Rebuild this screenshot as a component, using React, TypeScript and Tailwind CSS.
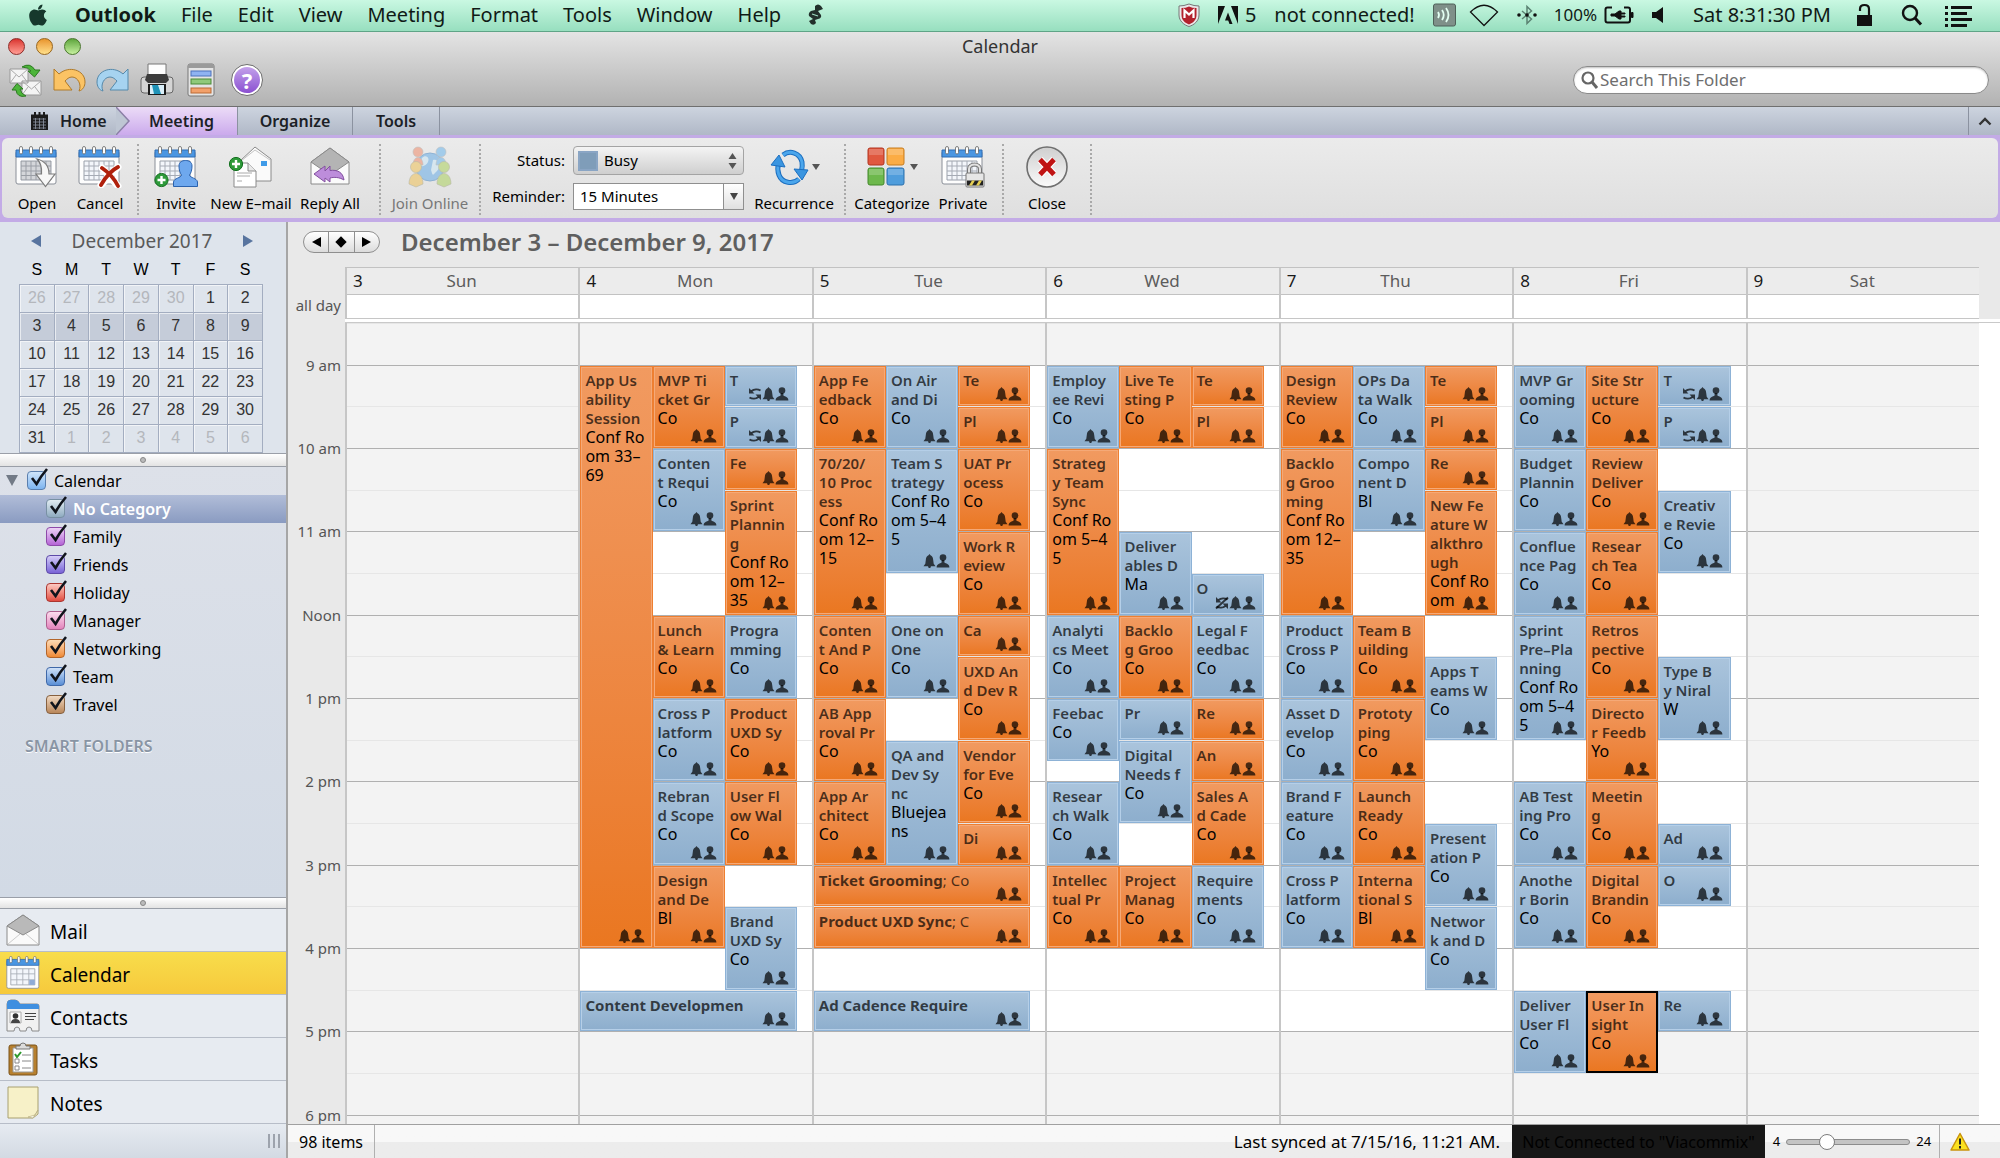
import React from "react";
import { FaApple } from "react-icons/fa";

type Tone = "o" | "b";
type Mark = "" | "recur" | "norecur" | "selected";
type Ev = [col: number, start: number, end: number, tone: Tone, title: string, place?: string, mark?: Mark];

const DAYS: { num: number; name: string; work: boolean; events: Ev[] }[] = [
  { num: 3, name: "Sun", work: false, events: [] },
  {
    num: 4, name: "Mon", work: true, events: [
      [1, 9, 16, "o", "App Us|ability|Session", "Conf Ro|om 33–|69"],
      [2, 9, 10, "o", "MVP Ti|cket Gr", "Co"],
      [2, 10, 11, "b", "Conten|t Requi", "Co"],
      [2, 12, 13, "o", "Lunch|& Learn", "Co"],
      [2, 13, 14, "b", "Cross P|latform", "Co"],
      [2, 14, 15, "b", "Rebran|d Scope", "Co"],
      [2, 15, 16, "o", "Design|and De", "Bl"],
      [3, 9, 9.5, "b", "T", "", "recur"],
      [3, 9.5, 10, "b", "P", "", "recur"],
      [3, 10, 10.5, "o", "Fe"],
      [3, 10.5, 12, "o", "Sprint|Plannin|g", "Conf Ro|om 12–|35"],
      [3, 12, 13, "b", "Progra|mming", "Co"],
      [3, 13, 14, "o", "Product|UXD Sy", "Co"],
      [3, 14, 15, "o", "User Fl|ow Wal", "Co"],
      [3, 15.5, 16.5, "b", "Brand|UXD Sy", "Co"],
      [0, 16.5, 17, "b", "Content Developmen"],
    ],
  },
  {
    num: 5, name: "Tue", work: true, events: [
      [1, 9, 10, "o", "App Fe|edback", "Co"],
      [1, 10, 12, "o", "70/20/|10 Proc|ess", "Conf Ro|om 12–|15"],
      [1, 12, 13, "o", "Conten|t And P", "Co"],
      [1, 13, 14, "o", "AB App|roval Pr", "Co"],
      [1, 14, 15, "o", "App Ar|chitect", "Co"],
      [2, 9, 10, "b", "On Air|and Di", "Co"],
      [2, 10, 11.5, "b", "Team S|trategy", "Conf Ro|om 5–4|5"],
      [2, 12, 13, "b", "One on|One", "Co"],
      [2, 13.5, 15, "b", "QA and|Dev Sy|nc", "Bluejea|ns"],
      [3, 9, 9.5, "o", "Te"],
      [3, 9.5, 10, "o", "Pl"],
      [3, 10, 11, "o", "UAT Pr|ocess", "Co"],
      [3, 11, 12, "o", "Work R|eview", "Co"],
      [3, 12, 12.5, "o", "Ca"],
      [3, 12.5, 13.5, "o", "UXD An|d Dev R", "Co"],
      [3, 13.5, 14.5, "o", "Vendor|for Eve", "Co"],
      [3, 14.5, 15, "o", "Di"],
      [0, 15, 15.5, "o", "Ticket Grooming", "Co"],
      [0, 15.5, 16, "o", "Product UXD Sync", "C"],
      [0, 16.5, 17, "b", "Ad Cadence Require"],
    ],
  },
  {
    num: 6, name: "Wed", work: true, events: [
      [1, 9, 10, "b", "Employ|ee Revi", "Co"],
      [1, 10, 12, "o", "Strateg|y Team|Sync", "Conf Ro|om 5–4|5"],
      [1, 12, 13, "b", "Analyti|cs Meet", "Co"],
      [1, 13, 13.75, "b", "Feebac", "Co"],
      [1, 14, 15, "b", "Resear|ch Walk", "Co"],
      [1, 15, 16, "o", "Intellec|tual Pr", "Co"],
      [2, 9, 10, "o", "Live Te|sting P", "Co"],
      [2, 11, 12, "b", "Deliver|ables D", "Ma"],
      [2, 12, 13, "o", "Backlo|g Groo", "Co"],
      [2, 13, 13.5, "b", "Pr"],
      [2, 13.5, 14.5, "b", "Digital|Needs f", "Co"],
      [2, 15, 16, "o", "Project|Manag", "Co"],
      [3, 9, 9.5, "o", "Te"],
      [3, 9.5, 10, "o", "Pl"],
      [3, 11.5, 12, "b", "O", "", "norecur"],
      [3, 12, 13, "b", "Legal F|eedbac", "Co"],
      [3, 13, 13.5, "o", "Re"],
      [3, 13.5, 14, "o", "An"],
      [3, 14, 15, "o", "Sales A|d Cade", "Co"],
      [3, 15, 16, "b", "Require|ments", "Co"],
    ],
  },
  {
    num: 7, name: "Thu", work: true, events: [
      [1, 9, 10, "o", "Design|Review", "Co"],
      [1, 10, 12, "o", "Backlo|g Groo|ming", "Conf Ro|om 12–|35"],
      [1, 12, 13, "b", "Product|Cross P", "Co"],
      [1, 13, 14, "b", "Asset D|evelop", "Co"],
      [1, 14, 15, "b", "Brand F|eature", "Co"],
      [1, 15, 16, "b", "Cross P|latform", "Co"],
      [2, 9, 10, "b", "OPs Da|ta Walk", "Co"],
      [2, 10, 11, "b", "Compo|nent D", "Bl"],
      [2, 12, 13, "o", "Team B|uilding", "Co"],
      [2, 13, 14, "o", "Prototy|ping", "Co"],
      [2, 14, 15, "o", "Launch|Ready", "Co"],
      [2, 15, 16, "o", "Interna|tional S", "Bl"],
      [3, 9, 9.5, "o", "Te"],
      [3, 9.5, 10, "o", "Pl"],
      [3, 10, 10.5, "o", "Re"],
      [3, 10.5, 12, "o", "New Fe|ature W|alkthro|ugh", "Conf Ro|om"],
      [3, 12.5, 13.5, "b", "Apps T|eams W", "Co"],
      [3, 14.5, 15.5, "b", "Present|ation P", "Co"],
      [3, 15.5, 16.5, "b", "Networ|k and D", "Co"],
    ],
  },
  {
    num: 8, name: "Fri", work: true, events: [
      [1, 9, 10, "b", "MVP Gr|ooming", "Co"],
      [1, 10, 11, "b", "Budget|Plannin", "Co"],
      [1, 11, 12, "b", "Conflue|nce Pag", "Co"],
      [1, 12, 13.5, "b", "Sprint|Pre–Pla|nning", "Conf Ro|om 5–4|5"],
      [1, 14, 15, "b", "AB Test|ing Pro", "Co"],
      [1, 15, 16, "b", "Anothe|r Borin", "Co"],
      [1, 16.5, 17.5, "b", "Deliver|User Fl", "Co"],
      [2, 9, 10, "o", "Site Str|ucture", "Co"],
      [2, 10, 11, "o", "Review|Deliver", "Co"],
      [2, 11, 12, "o", "Resear|ch Tea", "Co"],
      [2, 12, 13, "o", "Retros|pective", "Co"],
      [2, 13, 14, "o", "Directo|r Feedb", "Yo"],
      [2, 14, 15, "o", "Meetin|g", "Co"],
      [2, 15, 16, "o", "Digital|Brandin", "Co"],
      [2, 16.5, 17.5, "o", "User In|sight", "Co", "selected"],
      [3, 9, 9.5, "b", "T", "", "recur"],
      [3, 9.5, 10, "b", "P", "", "recur"],
      [3, 10.5, 11.5, "b", "Creativ|e Revie", "Co"],
      [3, 12.5, 13.5, "b", "Type B|y Niral", "W"],
      [3, 14.5, 15, "b", "Ad"],
      [3, 15, 15.5, "b", "O"],
      [3, 16.5, 17, "b", "Re"],
    ],
  },
  { num: 9, name: "Sat", work: false, events: [] },
];

const HOURS = ["9 am", "10 am", "11 am", "Noon", "1 pm", "2 pm", "3 pm", "4 pm", "5 pm", "6 pm"];

/* ---------- small icons ---------- */

const Bell = () => (
  <svg width="13" height="14" viewBox="0 0 13 14" fill="currentColor" aria-hidden="true">
    <path d="M6.500 0 7.500 1.300C9.300 1.800 10 3.800 10.200 6L10.700 9.800 12.500 12.200H8L7.300 14H5.700L5 12.200H0.500L2.300 9.800 2.800 6C3 3.800 3.700 1.800 5.500 1.300Z" />
  </svg>
);
const Person = () => (
  <svg width="14" height="14" viewBox="0 0 14 14" fill="currentColor" aria-hidden="true">
    <circle cx="7" cy="3.6" r="3.3" />
    <path d="M5.600 6H8.400V8.200H5.600ZM0.600 13.500C0.600 12 1.300 10.600 3 9.800 4.500 9 5.500 9 6 8H8C8.500 9 9.500 9 11 9.800 12.700 10.600 13.400 12 13.400 13.500Z" />
  </svg>
);
const Recur = ({ off }: { off?: boolean }) => (
  <svg width="14" height="14" viewBox="0 0 14 14" fill="none" stroke="currentColor" strokeWidth="2" aria-hidden="true">
    <path d="M12.500 3.500C10 2 6 2 3.500 4M1.500 10.500C4 12 8 12 10.500 10" />
    <path d="M1 1V6.500H6.500ZM13 13V7.500H7.500Z" fill="currentColor" stroke="none" />
    {off && <path d="M1 12.500 13 1.500" />}
  </svg>
);

const Plus = ({ cx, cy }: { cx: number; cy: number }) => (
  <g>
    <circle cx={cx} cy={cy} r="6.600" fill="#2e9a3a" stroke="#14701f" />
    <path d={`M${cx - 4} ${cy}H${cx + 4}M${cx} ${cy - 4}V${cy + 4}`} stroke="#fff" strokeWidth="2.400" />
  </g>
);

const CalendarBase = ({ small }: { small?: boolean }) => (
  <g>
    <rect x="1" y="5" width="40" height="33" rx="2" fill="#fdfdfd" stroke="#8a8f98" />
    <path d="M1 4H41V11H1Z" fill="#4a96e2" stroke="#2f6cb4" />
    <path d="M6 15H36V34H6Z" fill="#f3f6fb" stroke="#9aa0aa" />
    <path
      d={small ? "M6 21H36M6 28H36M13.500 15V34M21 15V34M28.500 15V34" : "M6 20H36M6 25H36M6 29.500H36M11 15V34M16 15V34M21 15V34M26 15V34M31 15V34"}
      stroke="#a6abb5"
    />
    {small && <path d="M29 28H36V34H29Z" fill="#8fabd6" />}
    {[6, 16, 26, 36].map((x) => (
      <rect key={x} x={x - 1.5} y="0.500" width="3" height="7.500" rx="1.500" fill="#fff" stroke="#666" strokeWidth="0.800" />
    ))}
  </g>
);

const Big = ({ children, faded }: { children: React.ReactNode; faded?: boolean }) => (
  <svg width="44" height="42" viewBox="0 0 44 42" fill="none" className={faded ? "opacity-50" : ""} aria-hidden="true">
    {children}
  </svg>
);

const OpenIcon = () => (
  <Big>
    <CalendarBase />
    <path d="M6 15H36V34H6Z" fill="#777" opacity="0.250" />
    <path d="M22 13C30 15 34 20 34 28H40L30.500 40.500 21 28H26.500C27 22 26 17 22 13Z" fill="#f7f7f7" stroke="#7c7c7c" strokeWidth="1.200" />
  </Big>
);
const CancelIcon = () => (
  <Big>
    <CalendarBase />
    <path d="M24 22 40 40M40 21 23 39" stroke="#fff" strokeWidth="7" strokeLinecap="round" />
    <path d="M24 22C30 26 36 32 40 40M40 21C32 25 27 32 23 39" stroke="#b0200c" strokeWidth="3.800" strokeLinecap="round" />
  </Big>
);
const InviteIcon = () => (
  <Big>
    <CalendarBase />
    <path d="M25 20C25 16 28 14.500 31.500 14.500S38 16 38 20C38 24 37 27 35.500 29 36 32 43 32 43.500 36V40.500H19.500V36C20 32 27 32 27.500 29 26 27 25 24 25 20Z" fill="#6ea8ee" stroke="#2b62ad" />
    <Plus cx={7.5} cy={34} />
  </Big>
);
const NewMailIcon = () => (
  <Big>
    <path d="M11 15 26 1 42 13V35H11Z" fill="#fafafa" stroke="#8a8a8a" />
    <path d="M12 15 26 4 41 14" stroke="#c4c4c4" />
    <path d="M32 15H38V20H32Z" fill="#3f9be8" />
    <path d="M5 17H19L27 25V41H5Z" fill="#fff" stroke="#8a8a8a" />
    <path d="M19 17V25H27" stroke="#8a8a8a" fill="#e8e8e8" />
    <path d="M8 27H23M8 30H21M8 35H13" stroke="#aaa" />
    <Plus cx={7} cy={18} />
  </Big>
);
const ReplyAllIcon = () => (
  <Big>
    <path d="M3 16 22 2 41 16V38H3Z" fill="#fbfbfb" stroke="#8a8a8a" />
    <path d="M3 16 22 2 41 16 22 29Z" fill="#b4b4b4" stroke="#8a8a8a" />
    <path d="M6 28 17 20V25L22 20V24.500C29 23.500 35 26 36 34 31 31 26 31 22 32V36L17 32V36Z" fill="#bd8ddb" stroke="#83509f" />
  </Big>
);
const JoinIcon = () => (
  <Big faded>
    <circle cx="22" cy="21" r="14" fill="#5ba6e6" stroke="#3a7fc0" />
    <path d="M14 12C18 8 22 12 20 16S13 22 12 18ZM25 14C30 12 34 20 29 25S25 30 23 24Z" fill="#c7e6f7" />
    {([
      ["#f0825f", 10, 6], ["#5fb0ec", 33, 6],
    ] as [string, number, number][]).map(([c, x, y]) => (
      <g key={c} fill={c} stroke="#999" strokeWidth="0.600">
        <path d={`M${x - 5} ${y + 13}C${x - 5} ${y + 3} ${x + 5} ${y + 3} ${x + 5} ${y + 13}Z`} />
        <circle cx={x} cy={y} r="5" />
      </g>
    ))}
    {([
      ["#f0be4a", 8, 21], ["#a6cf52", 36, 21],
    ] as [string, number, number][]).map(([c, x, y]) => (
      <g key={c} fill={c} stroke="#8d8d6a" strokeWidth="0.600">
        <path d={`M${x - 7} ${y + 17}C${x - 7} ${y + 3} ${x + 7} ${y + 3} ${x + 7} ${y + 17}L${x} ${y + 20}Z`} />
        <circle cx={x} cy={y} r="5.500" />
      </g>
    ))}
  </Big>
);
const RecurrenceIcon = () => (
  <Big>
    <path d="M31 33C25 39 14 37 11 29 9.500 25 9.500 21 10.500 18M15 9C22 3.500 32 7 34 16 34.500 19 34.300 22 33.500 25" stroke="#1c6fc0" strokeWidth="5" />
    <path d="M31 33C25 39 14 37 11 29 9.500 25 9.500 21 10.500 18M15 9C22 3.500 32 7 34 16 34.500 19 34.300 22 33.500 25" stroke="#4ba6ec" strokeWidth="3" />
    <path d="M3 19 11 9 17 21ZM40 24 34 34 26 23Z" fill="#3a95e0" stroke="#1c6fc0" />
  </Big>
);
const CategorizeIcon = () => (
  <Big>
    <rect x="2" y="2" width="16" height="17" rx="2" fill="#e0583f" stroke="#b23420" />
    <rect x="21" y="2" width="17" height="17" rx="2" fill="#fbac45" stroke="#c77d1f" />
    <rect x="2" y="22" width="16" height="17" rx="2" fill="#6db84c" stroke="#43882a" />
    <rect x="21" y="22" width="17" height="17" rx="2" fill="#4f9ddc" stroke="#2c70ad" />
    <path d="M3 3H17V9H3ZM22 3H37V9H22ZM3 23H17V29H3ZM22 23H37V29H22Z" fill="#fff" opacity="0.200" />
  </Big>
);
const PrivateIcon = () => (
  <Big>
    <CalendarBase />
    <path d="M28 28V23C28 17 39 17 39 23V28" stroke="#777" strokeWidth="4" />
    <path d="M28 28V23C28 17 39 17 39 23V28" stroke="#e2e2e2" strokeWidth="2" />
    <rect x="25" y="27" width="18" height="14" rx="1" fill="#e6e6e6" stroke="#777" />
    <path d="M26 34.500H42V39.500H26Z" fill="#222" />
    <path d="M28 39.500 31 34.500H34L31 39.500ZM35 39.500 38 34.500H41L38 39.500Z" fill="#e6cf52" />
  </Big>
);
const CloseIcon = () => (
  <Big>
    <defs>
      <linearGradient id="close-face" x1="0" y1="0" x2="0" y2="1">
        <stop offset="0" stopColor="#cfcfcf" />
        <stop offset="1" stopColor="#fafafa" />
      </linearGradient>
    </defs>
    <circle cx="22" cy="21" r="20" fill="url(#close-face)" stroke="#6f6f6f" strokeWidth="1.600" />
    <path d="M15 13.500 29 28.500M29 13.500 15 28.500" stroke="#fff" strokeWidth="7" />
    <path d="M15 13.500 29 28.500M29 13.500 15 28.500" stroke="#c01414" strokeWidth="5" />
  </Big>
);

/* ---------- menu bar ---------- */

const Glyph = ({ w, h = 24, children }: { w: number; h?: number; children: React.ReactNode }) => (
  <svg width={w} height={h} viewBox={`0 0 ${w} ${h}`} fill="none" aria-hidden="true">{children}</svg>
);

function MenuBar() {
  return (
    <header className="flex h-8 shrink-0 items-center overflow-hidden whitespace-nowrap border-b border-[#5fa487] bg-linear-to-b from-[#c9f8e2] to-[#97dfbf] pb-0.5 text-[20px] text-[#101a16]">
      <nav className="flex items-center gap-[25px] pl-[26px]">
        <button aria-label="Apple menu" className="text-[#16382c]"><FaApple size={24} /></button>
        <button className="font-bold">Outlook</button>
        {["File", "Edit", "View", "Meeting", "Format", "Tools", "Window", "Help"].map((m) => (
          <button key={m}>{m}</button>
        ))}
        <button aria-label="Scripts">
          <Glyph w={18}>
            <path d="M9 3Q12 0 15 3L17 6 12 8 15 12Q16 15 12 16L9 17 10 20Q8 23 5 21L3 18 7 16 3 13Q2 10 5 8L9 7Z" fill="#22302b" />
            <path d="M6 11 12 13" stroke="#9fdcc2" strokeWidth="1.200" />
          </Glyph>
        </button>
      </nav>
      <div className="ml-auto flex items-center pr-[27px]">
        <button aria-label="Security shield">
          <Glyph w={22}>
            <path d="M1 3Q6 3 11 1 16 3 21 3V12C21 18 16 22 11 23.500 6 22 1 18 1 12Z" fill="#e9e9e9" stroke="#777" />
            <path d="M3.500 5Q8 5 11 3.500 14 5 18.500 5V12C18.500 17 15 20 11 21.500 7 20 3.500 17 3.500 12Z" fill="#b3222d" />
            <path d="M6.500 15V7.500L11 11.500 15.500 7.500V15" stroke="#fff" strokeWidth="2.200" />
          </Glyph>
        </button>
        <button className="ml-[17px] flex items-center gap-1.5">
          <Glyph w={22}><path d="M1 3H8L1 21ZM14 3H21V21ZM11 9.500 15.500 21H12.500L11.200 17.500H8Z" fill="#111" /></Glyph>
          5
        </button>
        <button className="ml-[18px]">not connected!</button>
        <button aria-label="Signal" className="ml-[18px]">
          <Glyph w={23}>
            <rect x="0.500" y="1" width="22" height="22" rx="2" fill="#7f9089" stroke="#4e6159" />
            <path d="M5 9Q7 12 5 15M9 7Q12.500 12 9 17M13 5Q18 12 13 19" stroke="#e3fff2" strokeWidth="1.800" />
          </Glyph>
        </button>
        <button aria-label="Wi-Fi" className="ml-[13px]">
          <Glyph w={30}><path d="M15 22.500 1.500 9Q15-4.500 28.500 9Z" stroke="#111" strokeWidth="1.300" /></Glyph>
        </button>
        <button aria-label="Bluetooth" className="ml-[17px]">
          <Glyph w={22}>
            <path d="M6 8 15.500 16 11 20.500V3.500L15.500 8 6 16" stroke="#5b8272" strokeWidth="1.500" />
            <circle cx="3" cy="12" r="1.800" fill="#111" /><circle cx="11" cy="12" r="1.800" fill="#111" /><circle cx="19" cy="12" r="1.800" fill="#111" />
          </Glyph>
        </button>
        <button className="ml-4 flex items-center gap-[7px] text-[17px]">
          100%
          <Glyph w={30}>
            <path d="M8 4.500H3.500Q1.500 4.500 1.500 6.500V17.500Q1.500 19.500 3.500 19.500H24Q26 19.500 26 17.500V6.500Q26 4.500 24 4.500H20" stroke="#111" strokeWidth="2" />
            <path d="M27.500 9.500H29V14.500H27.500ZM7 11H11L15 8H17V10H21V11H17V13H21V14H17V16H15L11 13H7Z" fill="#111" stroke="#111" />
          </Glyph>
        </button>
        <button aria-label="Volume" className="ml-[17px]"><Glyph w={14}><path d="M1 9H5L12 4V20L5 15H1Z" fill="#111" /></Glyph></button>
        <button className="ml-[28px]">Sat 8:31:30 PM</button>
        <button aria-label="Lock" className="ml-[25px]">
          <Glyph w={17}><path d="M1 12H16V23H1Z" fill="#111" /><path d="M4 8V6Q4 2 8.500 2T13 6V13" stroke="#111" strokeWidth="2.200" /></Glyph>
        </button>
        <button aria-label="Spotlight" className="ml-7">
          <Glyph w={22}><circle cx="9" cy="10" r="7" stroke="#111" strokeWidth="2.400" /><path d="M14 15 20 21.500" stroke="#111" strokeWidth="3" /></Glyph>
        </button>
        <button aria-label="Notifications" className="ml-5">
          <Glyph w={30}><path d="M2 4.500H5M8 4.500H29M2 10.500H5M8 10.500H24M2 16.500H5M8 16.500H29M2 22.500H5M8 22.500H24" stroke="#111" strokeWidth="3.200" /></Glyph>
        </button>
      </div>
    </header>
  );
}

/* ---------- window title, toolbar ---------- */

const Tool = ({ label, children }: { label: string; children: React.ReactNode }) => (
  <button aria-label={label} className="flex w-11 justify-center">
    <svg width="34" height="34" viewBox="0 0 34 34" fill="none" aria-hidden="true">{children}</svg>
  </button>
);

function TitleBar() {
  return (
    <section className="flex h-[75px] shrink-0 flex-col border-b border-[#6f6f6f] bg-linear-to-b from-[#e4e4e4] to-[#b2b2b2]">
      <div className="grid h-7 grid-cols-3 items-center">
        <div className="flex gap-[11px] pl-2">
          <button aria-label="Close window" className="size-[17px] rounded-full border border-[#8d2b27] bg-linear-to-b from-[#d9302f] to-[#ff9c94]" />
          <button aria-label="Minimize" className="size-[17px] rounded-full border border-[#97651d] bg-linear-to-b from-[#e8952a] to-[#ffe08a]" />
          <button aria-label="Zoom window" className="size-[17px] rounded-full border border-[#49762c] bg-linear-to-b from-[#5ea63c] to-[#c6f09f]" />
        </div>
        <h1 className="text-center text-lg text-[#333]">Calendar</h1>
      </div>
      <div className="mt-[3px] flex items-center justify-between pl-[3px] pr-[11px]">
        <div className="flex">
          <Tool label="Send and receive">
            <path d="M2 6H20V20H2ZM14 18H33V32H14Z" fill="#f4f4f4" stroke="#999" />
            <path d="M2 6 11 14 20 6M14 18 23.500 26 33 18M2 20 8 12M20 20 14 12M14 32 20 24M33 32 27 24" stroke="#aaa" />
            <path d="M14 4Q22-1 27 7H32L26.500 14 20 8H23Q20 4 14 4ZM18 33Q9 35 8 27H4L9 20.500 15 26H12Q13 31 18 33Z" fill="#4cb53a" stroke="#2c7a20" />
          </Tool>
          <Tool label="Undo">
            <path d="M2 6 7 11C17 2 33 7 33 19 33 23 31 27 27 28 30 22 26 14 20 14 17 14 15 16 13 18L20 27H2Z" fill="#fbc364" stroke="#b07a28" />
          </Tool>
          <Tool label="Redo">
            <path d="M32 6 27 11C17 2 1 7 1 19 1 23 3 27 7 28 4 22 8 14 14 14 17 14 19 16 21 18L14 27H32Z" fill="#a6d3f0" stroke="#5589ab" />
          </Tool>
          <Tool label="Print">
            <path d="M8 1H26V15H8Z" fill="#fdfdfd" stroke="#777" />
            <rect x="1" y="14" width="32" height="16" rx="3" fill="#d4d4d4" stroke="#666" />
            <path d="M7 11H27L29 17 26 20H8L5 17Z" fill="#3c3c3c" />
            <path d="M8 21H26V32H8Z" fill="#1c1c1c" />
            <path d="M10 22H24V31H10Z" fill="#d9eef8" />
            <path d="M12 22H18L21 31H14Z" fill="#1f93b8" />
          </Tool>
          <Tool label="My Day">
            <rect x="4" y="1" width="26" height="32" rx="2" fill="#e4e4e4" stroke="#777" />
            <path d="M4 3Q4 1 6 1H28Q30 1 30 3V5H4Z" fill="#9a9a9a" />
            <rect x="7" y="8" width="20" height="5" fill="#8fb3f2" stroke="#4d72bb" />
            <rect x="7" y="16" width="20" height="5" fill="#8fc97a" stroke="#4b8a38" />
            <rect x="7" y="25" width="20" height="5" fill="#f2a06a" stroke="#bb6a34" />
          </Tool>
          <button aria-label="Help" className="ml-2 flex size-8 items-center justify-center self-center rounded-full border border-[#6d6d6d] bg-white">
            <span className="flex size-[26px] items-center justify-center rounded-full bg-linear-to-b from-[#c3a0ea] to-[#8b4fd0] text-[22px] font-bold leading-none text-white">?</span>
          </button>
        </div>
        <label className="flex h-7 w-[416px] items-center rounded-full border border-[#8a8a8a] bg-white pl-1.5 pr-4 shadow-[inset_0_1px_2px_rgba(0,0,0,.25)]">
          <Glyph w={20} h={20}><circle cx="8" cy="8" r="5.500" stroke="#666" strokeWidth="2.200" /><path d="M12 12 17 18" stroke="#666" strokeWidth="3" /></Glyph>
          <input type="search" aria-label="Search This Folder" placeholder="Search This Folder" className="min-w-0 flex-1 bg-transparent text-[17px] outline-none placeholder:text-[#6e6e6e]" />
        </label>
      </div>
    </section>
  );
}

function Tabs() {
  const tab = "flex items-center justify-center border-r border-[#8b92a0]";
  return (
    <nav className="flex h-7 shrink-0 items-stretch bg-linear-to-b from-[#cdd4df] to-[#b0b8c7] text-[16px] font-semibold text-[#1c1f26]">
      <button className="flex w-[116px] items-center gap-[11px] pl-[30px]">
        <svg width="19" height="18" viewBox="0 0 19 18" aria-hidden="true">
          <path d="M1 2.500H18V18H1Z" fill="#1a1a1a" />
          <path d="M3 7H16M3 10H16M3 13H16M3 16H16M5.500 6V17M9.500 6V17M13.500 6V17" stroke="#8e96a4" strokeWidth="0.800" />
          <path d="M4 0H6V4H4ZM8.500 0H10.500V4H8.500ZM13 0H15V4H13Z" fill="#1a1a1a" />
        </svg>
        Home
      </button>
      <button className="flex w-[121px] items-center bg-linear-to-b from-[#ecdcf7] to-[#cbaaec]">
        <svg width="14" height="28" viewBox="0 0 14 28" className="shrink-0" aria-hidden="true">
          <path d="M0 0 13 14 0 28Z" fill="#bec6d3" />
          <path d="M0 0 13 14 0 28" fill="none" stroke="#8b7fa6" strokeWidth="1.500" />
        </svg>
        <span className="flex-1 pr-1 text-center">Meeting</span>
      </button>
      <button className={`${tab} w-[116px] border-l`}>Organize</button>
      <button className={`${tab} w-[87px]`}>Tools</button>
      <button aria-label="Collapse ribbon" className="ml-auto flex w-8 items-center justify-center border-l border-[#8b92a0]">
        <Glyph w={16} h={12}><path d="M2.500 9.500 8 4 13.500 9.500" stroke="#333" strokeWidth="2.400" /></Glyph>
      </button>
    </nav>
  );
}

const RibbonButton = ({ label, w, icon, arrow, dim }: { label: string; w: string; icon: React.ReactNode; arrow?: boolean; dim?: boolean }) => (
  <button disabled={dim} className={`${w} flex flex-col items-center justify-between whitespace-nowrap ${dim ? "text-[#777]" : "text-black"}`}>
    <span className="flex items-center">
      {icon}
      {arrow && <span className="size-0 border-x-[4px] border-t-[6px] border-x-transparent border-t-[#555]" />}
    </span>
    <span className="leading-5">{label}</span>
  </button>
);
const Sep = ({ m }: { m: string }) => <div className={`${m} my-[-2px] border-l-2 border-dotted border-[#a9a9a9]`} />;

function Ribbon() {
  return (
    <section className="shrink-0 border-b-4 border-l-2 border-r-2 border-t-[3px] border-[#c3abe6] bg-[#c3abe6]">
      <div className="flex h-20 items-stretch rounded-md bg-linear-to-b from-[#ebebeb] to-[#dfdfdf] pb-[5px] pl-1 pt-2 text-[15px]">
        <RibbonButton label="Open" w="w-[62px]" icon={<OpenIcon />} />
        <RibbonButton label="Cancel" w="w-16" icon={<CancelIcon />} />
        <Sep m="ml-[5px] mr-1.5" />
        <RibbonButton label="Invite" w="w-[62px]" icon={<InviteIcon />} />
        <RibbonButton label="New E–mail" w="w-[88px]" icon={<NewMailIcon />} />
        <RibbonButton label="Reply All" w="w-[70px]" icon={<ReplyAllIcon />} />
        <Sep m="ml-3.5 mr-1.5" />
        <RibbonButton label="Join Online" w="w-[86px]" icon={<JoinIcon />} dim />
        <Sep m="mx-1.5" />
        <div className="grid grid-cols-[78px_171px] content-between items-center gap-x-2 pb-[3px]">
          <label htmlFor="status" className="text-right">Status:</label>
          <div className="flex h-[29px] items-center rounded-sm border border-[#a4a4a4] bg-linear-to-b from-[#f4f4f4] to-[#cfcfcf] pl-1 pr-1.5">
            <span className="size-5 border-2 border-[#8aa5c4] bg-[#7f9db9]" />
            <select id="status" defaultValue="Busy" className="min-w-0 flex-1 appearance-none bg-transparent pl-1.5 outline-none">
              <option>Busy</option><option>Free</option><option>Tentative</option><option>Out of Office</option>
            </select>
            <Glyph w={9} h={18}><path d="M0.500 7 4.500 1 8.500 7ZM0.500 11 4.500 17 8.500 11Z" fill="#555" /></Glyph>
          </div>
          <label htmlFor="reminder" className="text-right">Reminder:</label>
          <div className="flex h-[27px] border border-[#8f8f8f] bg-white">
            <input id="reminder" defaultValue="15 Minutes" className="w-0 min-w-0 flex-1 pl-1.5 outline-none" />
            <button aria-label="Reminder choices" className="flex w-5 items-center justify-center border-l border-[#8f8f8f] bg-linear-to-b from-white to-[#e0e0e0]">
              <span className="size-0 border-x-[4px] border-t-[7px] border-x-transparent border-t-[#444]" />
            </button>
          </div>
        </div>
        <div className="w-2" />
        <RibbonButton label="Recurrence" w="w-[84px]" icon={<RecurrenceIcon />} arrow />
        <Sep m="ml-2 mr-1.5" />
        <RibbonButton label="Categorize" w="w-20" icon={<CategorizeIcon />} arrow />
        <RibbonButton label="Private" w="w-[62px]" icon={<PrivateIcon />} />
        <Sep m="ml-2 mr-3" />
        <RibbonButton label="Close" w="w-[62px]" icon={<CloseIcon />} />
        <Sep m="ml-3" />
      </div>
    </section>
  );
}

/* ---------- sidebar ---------- */

const WEEKS = [
  [26, 27, 28, 29, 30, 1, 2],
  [3, 4, 5, 6, 7, 8, 9],
  [10, 11, 12, 13, 14, 15, 16],
  [17, 18, 19, 20, 21, 22, 23],
  [24, 25, 26, 27, 28, 29, 30],
  [31, 1, 2, 3, 4, 5, 6],
];

const CATEGORIES = [
  ["No Category", "from-[#e2edf3] to-[#8fabc0] border-[#7890a3]"],
  ["Family", "from-[#ecd3f5] to-[#b563d6] border-[#8d4aa8]"],
  ["Friends", "from-[#d6cdf7] to-[#7a62d6] border-[#5d4aa8]"],
  ["Holiday", "from-[#fbc9c2] to-[#e04a40] border-[#ab3630]"],
  ["Manager", "from-[#fbdcee] to-[#e284bd] border-[#ad5f8e]"],
  ["Networking", "from-[#fddcb5] to-[#ee8a33] border-[#b3652a]"],
  ["Team", "from-[#cfe1f8] to-[#5a8fd6] border-[#3f68a8]"],
  ["Travel", "from-[#f0d9c2] to-[#b9875a] border-[#86603f]"],
];

const Check = ({ name, tone }: { name: string; tone: string }) => (
  <label className="flex items-center">
    <span className="relative mr-2 flex">
      <input type="checkbox" defaultChecked className={`peer size-[19px] appearance-none rounded-sm border bg-linear-to-b ${tone}`} />
      <svg width="22" height="22" viewBox="0 0 22 22" className="pointer-events-none invisible absolute -top-1 left-0.5 peer-checked:visible" fill="none" aria-hidden="true">
        <path d="M3 11 7.500 17Q12 9 18 2" stroke="#10141c" strokeWidth="2.600" />
      </svg>
    </span>
    {name}
  </label>
);

const Splitter = ({ h }: { h: string }) => (
  <div className={`${h} flex shrink-0 items-center justify-center border-y border-[#9a9fa8] bg-linear-to-b from-white to-[#e3e3e3]`}>
    <span className="size-1.5 rounded-full border border-[#888] bg-[#bbb]" />
  </div>
);

const NAV: [string, React.ReactNode][] = [
  ["Mail", <g key="m"><path d="M1 13 17 2 33 13V32H1Z" fill="#fafafa" stroke="#8a8a8a" /><path d="M1 13 17 2 33 13 17 22Z" fill="#b9b9b9" stroke="#8a8a8a" /><path d="M2 31 14 21M32 31 20 21" stroke="#ccc" /></g>],
  ["Calendar", <g key="c" transform="scale(.8 .85)"><CalendarBase small /></g>],
  ["Contacts", <g key="k"><path d="M1 5Q1 1 5 1H9Q12 1 14 5H31Q33 5 33 7V32H26Q26 28 23 28T20 32H14Q14 28 11 28T8 32H1Z" fill="#f1f1f1" stroke="#8a8a8a" /><path d="M1 5Q1 1 5 1H9Q12 1 14 5H31Q33 5 33 7V10H1Z" fill="#3f8fe0" /><path d="M4 13H15V24H4Z" fill="#fff" stroke="#aaa" /><circle cx="9.500" cy="17" r="2.800" fill="#333" /><path d="M5 24Q5 20 9.500 20T14 24ZM19 14H30V15H19ZM19 17H30V18H19ZM19 20H28V21H19Z" fill="#444" /></g>],
  ["Tasks", <g key="t"><rect x="3" y="3" width="28" height="30" rx="2" fill="#b7802f" stroke="#7a521a" /><path d="M7 6H27V30H7Z" fill="#fff" stroke="#999" /><path d="M10 7V4H14Q14 1 17 1T20 4H24V7Z" fill="#dcdcdc" stroke="#777" /><path d="M9 12 11 15 15 10" stroke="#2d9a2d" strokeWidth="2" /><path d="M9 17H13V21H9ZM9 24H13V28H9ZM16 13H25M16 19H25M16 26H25" stroke="#888" /></g>],
  ["Notes", <g key="n"><path d="M2 2H32V29L27 33H2Z" fill="#f7f1c8" stroke="#a8a070" /><path d="M32 25 27 33 22 32 29 30Z" fill="#fffdf0" stroke="#b7ae80" strokeWidth="0.700" /></g>],
];

function Sidebar() {
  return (
    <aside className="flex w-72 shrink-0 flex-col border-r-2 border-[#a6a6a6] bg-[#dee4ec]">
      <div className="flex flex-col px-[19px] pt-1">
        <div className="flex h-[30px] items-center justify-between pl-3 pr-3.5">
          <button aria-label="Previous month" className="size-0 border-y-[6px] border-r-[10px] border-y-transparent border-r-[#58749f]" />
          <h2 className="text-[19px] text-[#5a5a5a]">December 2017</h2>
          <button aria-label="Next month" className="size-0 border-y-[6px] border-l-[10px] border-y-transparent border-l-[#58749f]" />
        </div>
        <table className="w-[244px] table-fixed border-collapse text-center font-['Liberation_Sans',sans-serif] text-[16px] leading-5 text-[#333]">
          <thead>
            <tr className="h-7 text-black">
              {["S", "M", "T", "W", "T", "F", "S"].map((d, i) => <th key={i} scope="col" className="font-medium">{d}</th>)}
            </tr>
          </thead>
          <tbody>
            {WEEKS.map((week, r) => (
              <tr key={r} className={r === 1 ? "h-7 bg-[#c5ccd9]" : "h-7"}>
                {week.map((d, c) => {
                  const other = (r === 0 && d > 7) || (r === 5 && d < 7);
                  return (
                    <td key={c} className={`border border-[#a3adc0] p-0 shadow-[inset_1px_1px_0_rgba(255,255,255,.6)] ${other ? "text-[#b4b7bc]" : ""}`}>{d}</td>
                  );
                })}
              </tr>
            ))}
          </tbody>
        </table>
      </div>
      <Splitter h="h-3.5" />
      <div className="flex flex-1 flex-col overflow-hidden bg-linear-to-b from-[#dde1e9] to-[#d2dae5] text-[16px] text-black">
        <div className="flex h-7 shrink-0 items-center pl-1.5">
          <button aria-label="Collapse Calendar" className="mr-[9px] size-0 border-x-[6px] border-t-[11px] border-x-transparent border-t-[#727a86]" />
          <Check name="Calendar" tone="from-[#cfe5fb] to-[#7db4ef] border-[#5b7fae]" />
        </div>
        {CATEGORIES.map(([name, tone], i) => (
          <div key={name} className={`flex h-7 shrink-0 items-center pl-[46px] ${i === 0 ? "bg-linear-to-b from-[#b1bdd8] to-[#8a9bc1] font-semibold text-white" : ""}`}>
            <Check name={name} tone={tone} />
          </div>
        ))}
        <h3 className="mt-[15px] pl-[25px] text-[16px] font-semibold text-[#8995a4] [text-shadow:0_1px_0_#fff]">SMART FOLDERS</h3>
      </div>
      <Splitter h="h-3" />
      <nav className="shrink-0">
        {NAV.map(([name, icon]) => (
          <button key={name} className={`flex h-[43px] w-full items-center gap-2.5 border-b border-[#b7bdc8] pl-1.5 text-[19px] text-black ${name === "Calendar" ? "bg-linear-to-b from-[#f8dd4b] to-[#f6c93c]" : "bg-[#e7ebf1]"}`}>
            <svg width="34" height="34" viewBox="0 0 34 34" fill="none" aria-hidden="true">{icon}</svg>
            <span className="pt-1">{name}</span>
          </button>
        ))}
      </nav>
      <div className="flex h-[34px] shrink-0 items-center justify-end gap-[3px] bg-linear-to-b from-[#e6ebf1] to-[#d3dae3] pr-1.5">
        <span className="h-3.5 w-0.5 bg-[#9da3ad]" /><span className="h-3.5 w-0.5 bg-[#9da3ad]" /><span className="h-3.5 w-0.5 bg-[#9da3ad]" />
      </div>
    </aside>
  );
}

/* ---------- week view ---------- */

const row = (t: number) => Math.round((t - 8.5) * 4) + 1;

function Event({ ev }: { ev: Ev }) {
  const [col, start, end, tone, title, place, mark] = ev;
  const wide = col === 0;
  const look =
    mark === "selected"
      ? "outline-2 -outline-offset-2 outline-black border-black bg-linear-to-b from-[#f39c62] to-[#ea7720]"
      : tone === "o"
        ? "border-[#ee7f31] bg-linear-to-b from-[#f19a60] to-[#ea7720] shadow-[inset_0_0_0_1px_#f5a977]"
        : "border-[#8db2d6] bg-linear-to-b from-[#aac4dc] to-[#8daecd] shadow-[inset_0_0_0_1px_#b5cfe8]";
  return (
    <button
      className={`relative mt-px flex flex-col items-start overflow-hidden whitespace-nowrap border pl-1 pt-1 text-left text-[15px] leading-[19px] ${look}`}
      style={{ gridRow: `${row(start)} / ${row(end)}`, gridColumn: wide ? "1 / 4" : `${col}` }}
    >
      {wide ? (
        <span className="text-black/70"><b className="font-bold">{title}</b>{place && `; ${place}`}</span>
      ) : (
        <>
          {title.split("|").map((l, i) => <span key={`t${i}`} className="font-semibold text-black/70">{l}</span>)}
          {place && place.split("|").map((l, i) => <span key={`p${i}`} className="text-[16px] text-black">{l}</span>)}
        </>
      )}
      <span className="absolute bottom-1 right-[7px] flex text-black/70">
        {mark === "recur" && <Recur />}
        {mark === "norecur" && <Recur off />}
        <Bell />
        <Person />
      </span>
    </button>
  );
}

function Week() {
  return (
    <main className="flex min-w-0 flex-1 flex-col bg-[#e9e9e9]">
      <div className="flex h-[45px] shrink-0 items-center gap-[21px] pb-1.5 pl-[15px]">
        <div className="flex h-[22px] w-[77px] items-stretch rounded-full border border-[#8f8f8f] bg-linear-to-b from-white to-[#dcdcdc]">
          <button aria-label="Previous week" className="flex flex-1 items-center justify-center"><span className="size-0 border-y-[5px] border-r-[9px] border-y-transparent border-r-black" /></button>
          <button aria-label="Today" className="flex flex-1 items-center justify-center border-x border-[#8f8f8f]"><span className="size-2 rotate-45 bg-black" /></button>
          <button aria-label="Next week" className="flex flex-1 items-center justify-center"><span className="size-0 border-y-[5px] border-l-[9px] border-y-transparent border-l-black" /></button>
        </div>
        <h2 className="text-[24px] font-semibold text-[#5f5f5f]">December 3 – December 9, 2017</h2>
      </div>

      <div className="flex shrink-0">
        <div className="flex w-[57px] items-end justify-end pb-1 pr-1 text-[15px] text-[#555]"><span className="whitespace-nowrap leading-5">all day</span></div>
        <div className="mr-[21px] grid flex-1 grid-cols-7 border-t border-[#c2c2c2]">
          {DAYS.map((d) => (
            <div key={d.num} className="border-l-2 border-[#c6c6c6]">
              <div className="flex h-[27px] items-center border-b border-[#c2c2c2] bg-[#ececec] pl-1.5 text-[17px] text-[#5c5c5c]">
                <span className="w-4 text-[#1a1a1a]">{d.num}</span>
                <span className="flex-1 pr-6 text-center">{d.name}</span>
              </div>
              <div className="h-6 border-b border-[#c6c6c6] bg-white" />
            </div>
          ))}
        </div>
      </div>
      <div className="ml-[57px] h-1 shrink-0 border-b border-[#c9c9c9] bg-white" />

      <div className="min-h-0 flex-1 basis-0 overflow-hidden">
        <div className="flex h-[1000px]">
          <div className="grid w-[57px] grid-rows-12 items-center pr-1 text-right text-[15px] text-[#555]">
            {HOURS.map((h) => <span key={h} className="leading-3">{h}</span>)}
          </div>
          <div className="grid flex-1 grid-cols-7">
            {DAYS.map((d) => (
              <div key={d.num} className="grid grid-cols-[repeat(3,minmax(0,1fr))_15px] grid-rows-[repeat(48,minmax(0,1fr))] border-l-2 border-[#c6c6c6]">
                {Array.from({ length: 24 }, (_, i) => {
                  const open = d.work && i >= 1 && i <= 16;
                  return (
                    <div
                      key={i}
                      className={`border-t ${i % 2 ? "border-[#b0b0b0]" : "border-[#e6e6e6]"} ${open ? "bg-white" : "bg-[#f3f3f3]"}`}
                      style={{ gridRow: `${i * 2 + 1} / span 2`, gridColumn: "1 / -1" }}
                    />
                  );
                })}
                {d.events.map((ev, i) => <Event key={i} ev={ev} />)}
              </div>
            ))}
          </div>
          <div className="w-[21px] bg-white" />
        </div>
      </div>

      <footer className="flex h-[34px] shrink-0 items-stretch border-t border-[#a0a0a0] bg-linear-to-b from-[#f8f8f8] from-50% to-[#ececec] to-50% text-[16px] text-black">
        <div className="flex w-[87px] items-center justify-center border-r border-[#b0b0b0]">98 items</div>
        <div className="ml-auto flex items-center pr-3 text-[17px]">Last synced at 7/15/16, 11:21 AM.</div>
        <div className="flex w-[253px] items-center justify-center bg-[#171717] text-black">Not Connected to "Viacommix"</div>
        <label className="flex w-[175px] items-center justify-center gap-1.5 border-r border-[#b0b0b0] text-[13px]">
          4
          <input
            type="range" min="4" max="24" defaultValue="10" aria-label="Hours shown"
            className="h-1.5 w-[124px] appearance-none rounded-full border border-[#8c8c8c] bg-[#c4c4c4] [&::-webkit-slider-thumb]:size-4 [&::-webkit-slider-thumb]:appearance-none [&::-webkit-slider-thumb]:rounded-full [&::-webkit-slider-thumb]:border [&::-webkit-slider-thumb]:border-[#7d7d7d] [&::-webkit-slider-thumb]:bg-white"
          />
          24
        </label>
        <button aria-label="Warnings" className="flex w-[60px] items-center pl-2.5">
          <Glyph w={20} h={20}>
            <path d="M10 1.500 19 18H1Z" fill="#fbe11f" stroke="#c9930c" strokeWidth="1.500" strokeLinejoin="round" />
            <path d="M10 6.500V12.500M10 14V16.500" stroke="#222" strokeWidth="2" />
          </Glyph>
        </button>
      </footer>
    </main>
  );
}

export default function App() {
  return (
    <div className="flex h-screen flex-col overflow-hidden bg-[#e9e9e9] font-['Noto_Sans','Open_Sans',sans-serif]">
      <MenuBar />
      <TitleBar />
      <Tabs />
      <Ribbon />
      <div className="flex min-h-0 flex-1">
        <Sidebar />
        <Week />
      </div>
    </div>
  );
}
